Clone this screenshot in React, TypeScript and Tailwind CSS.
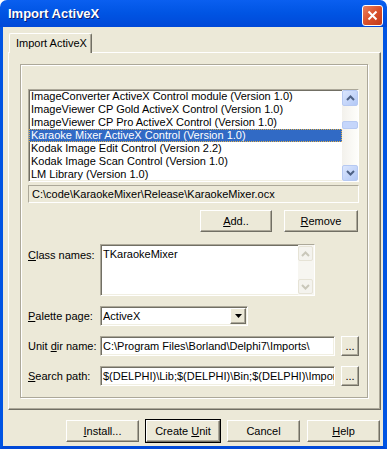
import React from "react";

const sunken =
  "border border-t-[#aca899] border-l-[#aca899] border-b-white border-r-white shadow-[inset_1px_1px_0_#716f64,inset_-1px_-1px_0_#f1efe2]";
const raised =
  "border border-t-white border-l-white border-b-[#716f64] border-r-[#716f64] shadow-[inset_-1px_-1px_0_#aca899]";

function Chevron({ up, color }: { up?: boolean; color: string }) {
  return (
    <svg width="9" height="6" viewBox="0 0 9 6">
      <polyline
        points={up ? "1,5 4.5,1.5 8,5" : "1,1 4.5,4.5 8,1"}
        fill="none"
        stroke={color}
        strokeWidth="2"
      />
    </svg>
  );
}

function ScrollBtn({ up, disabled }: { up?: boolean; disabled?: boolean }) {
  return (
    <div
      className={
        disabled
          ? "flex h-[15px] w-[15px] items-center justify-center rounded-[2px] border border-[#e6e3d6] bg-[#f4f3ee]"
          : "flex h-[16px] w-[16px] items-center justify-center rounded-[2px] border border-[#b6c9f2] bg-gradient-to-br from-[#dbe6fd] to-[#b2c8f6]"
      }
    >
      <Chevron up={up} color={disabled ? "#c9c7ba" : "#4d6185"} />
    </div>
  );
}

function Btn({
  children,
  w,
  def,
}: {
  children: React.ReactNode;
  w: string;
  def?: boolean;
}) {
  return (
    <div className={`${def ? "border border-black" : "p-px"} h-[24px] ${w} bg-[#ece9d8]`}>
      <div className={`${raised} flex h-full w-full items-center justify-center`}>
        {children}
      </div>
    </div>
  );
}

const items = [
  "ImageConverter ActiveX Control module (Version 1.0)",
  "ImageViewer CP Gold ActiveX Control (Version 1.0)",
  "ImageViewer CP Pro ActiveX Control (Version 1.0)",
  "Karaoke Mixer ActiveX Control (Version 1.0)",
  "Kodak Image Edit Control (Version 2.2)",
  "Kodak Image Scan Control (Version 1.0)",
  "LM Library (Version 1.0)",
];

export default function App() {
  return (
    <div
      className="h-[451px] w-[387px] overflow-hidden bg-white text-[11px] leading-[13px] text-black"
      style={{ fontFamily: '"Liberation Sans", Arial, sans-serif' }}
    >
      {/* title bar */}
      <div className="flex h-[27px] items-center justify-between rounded-t-[7px] bg-gradient-to-b from-[#0a5ff0] via-[#0054e3] to-[#0048d8] pl-[8px] pr-[4px]">
        <span className="text-[13px] font-bold text-white [text-shadow:1px_1px_0_#0a1e74]">
          Import ActiveX
        </span>
        <div className="mt-[4px] flex h-[21px] w-[21px] items-center justify-center rounded-[3px] border border-white bg-gradient-to-br from-[#e9805e] via-[#d9502a] to-[#c2391a]">
          <svg width="11" height="11" viewBox="0 0 11 11">
            <path d="M1.5 1.5 L9.5 9.5 M9.5 1.5 L1.5 9.5" stroke="white" strokeWidth="2" />
          </svg>
        </div>
      </div>

      {/* body */}
      <div className="h-[422px] border-x-[3px] border-b-[3px] border-x-[#0054e3] border-b-[#0049d8] border-r-[4px] bg-[#ece9d8] pl-[5px] pt-[6px]">
        <div className="relative z-10 -mb-px ml-px flex h-[20px] w-[83px] items-center rounded-t-[2px] border border-b-0 border-t-white border-l-white border-r-[#716f64] bg-[#ece9d8] pl-[6px] shadow-[inset_-1px_0_0_#aca899]">
          Import ActiveX
        </div>
        <div className="h-[358px] w-[373px] border border-t-white border-l-white border-b-[#716f64] border-r-[#716f64] pl-[11px] pt-[11px] shadow-[inset_-1px_-1px_0_#aca899]">
          <div className="h-[334px] w-[348px] border border-[#aca899] pl-[7px] pt-[24px] shadow-[inset_1px_1px_0_white,1px_1px_0_white]">
            {/* list */}
            <div className={`${sunken} flex h-[93px] w-[331px] bg-white`}>
              <div className="flex-1">
                {items.map((t, i) => (
                  <div
                    key={t}
                    className={
                      i === 3
                        ? "h-[13px] whitespace-nowrap bg-[#316ac5] pl-[2px] text-white outline-1 -outline-offset-1 outline-dotted outline-[#e2b04a]"
                        : "h-[13px] whitespace-nowrap pl-[2px]"
                    }
                  >
                    {t}
                  </div>
                ))}
              </div>
              <div className="flex w-[16px] flex-col bg-gradient-to-r from-[#f3f1ec] to-[#fefefb]">
                <ScrollBtn up />
                <div className="relative flex-1">
                  <div className="absolute left-0 top-[15px] h-[8px] w-[16px] rounded-[2px] border border-[#b6c9f2] bg-[#c5d6fb]" />
                </div>
                <ScrollBtn />
              </div>
            </div>

            {/* file path */}
            <div className="mt-[3px] flex h-[18px] w-[331px] items-center border border-t-[#aca899] border-l-[#aca899] border-b-white border-r-white pl-[3px]">
              C:\code\KaraokeMixer\Release\KaraokeMixer.ocx
            </div>

            <div className="mt-[6px] flex w-[331px] justify-end gap-[10px]">
              <Btn w="w-[74px]">
                <span>
                  <u>A</u>dd..
                </span>
              </Btn>
              <Btn w="w-[76px]">
                <span>
                  <u>R</u>emove
                </span>
              </Btn>
            </div>

            {/* class names */}
            <div className="mt-[11px] flex">
              <div className="w-[72px] pt-[5px]">
                <u>C</u>lass names:
              </div>
              <div className={`${sunken} flex h-[52px] w-[215px] bg-white`}>
                <div className="flex-1 pl-[2px] pt-[3px]">TKaraokeMixer</div>
                <div className="flex w-[16px] flex-col justify-between bg-[#f7f6f1] py-px">
                  <ScrollBtn up disabled />
                  <ScrollBtn disabled />
                </div>
              </div>
            </div>

            {/* palette page */}
            <div className="mt-[10px] flex items-center">
              <div className="w-[72px]">
                <u>P</u>alette page:
              </div>
              <div className={`${sunken} flex h-[20px] w-[148px] items-center justify-between bg-white pl-[2px] pr-px`}>
                <span>ActiveX</span>
                <div className={`${raised} flex h-[16px] w-[16px] items-center justify-center bg-[#ece9d8]`}>
                  <svg width="7" height="4" viewBox="0 0 7 4">
                    <path d="M0 0 H7 L3.5 4 Z" fill="black" />
                  </svg>
                </div>
              </div>
            </div>

            {/* unit dir */}
            <div className="mt-[9px] flex items-center">
              <div className="w-[72px]">
                Unit <u>d</u>ir name:
              </div>
              <div className={`${sunken} flex h-[20px] w-[235px] items-center bg-white pl-[2px]`}>
                C:\Program Files\Borland\Delphi7\Imports\
              </div>
              <div className="ml-[5px]">
                <Btn w="w-[20px] !h-[22px]">...</Btn>
              </div>
            </div>

            {/* search path */}
            <div className="mt-[8px] flex items-center">
              <div className="w-[72px]">
                <u>S</u>earch path:
              </div>
              <div className={`${sunken} flex h-[20px] w-[235px] items-center overflow-hidden whitespace-nowrap bg-white pl-[2px]`}>
                $(DELPHI)\Lib;$(DELPHI)\Bin;$(DELPHI)\Impor
              </div>
              <div className="ml-[5px]">
                <Btn w="w-[20px] !h-[22px]">...</Btn>
              </div>
            </div>
          </div>
        </div>

        {/* bottom buttons */}
        <div className="mt-[9px] flex w-[373px] justify-end gap-[5px]">
          <Btn w="w-[75px]">
            <span>
              <u>I</u>nstall...
            </span>
          </Btn>
          <Btn w="w-[76px]" def>
            <span>
              Create <u>U</u>nit
            </span>
          </Btn>
          <Btn w="w-[75px]">
            <span>Cancel</span>
          </Btn>
          <Btn w="w-[75px]">
            <span>
              <u>H</u>elp
            </span>
          </Btn>
        </div>
      </div>

      {/* clipped text under the window */}
      <div className="h-[2px] overflow-hidden whitespace-nowrap pl-[4px] text-[11px] leading-[13px]">
        lmboldflkdlb lldblkdt fldbdlhlt lbdkl dlfl htlbdlkt
      </div>
    </div>
  );
}
